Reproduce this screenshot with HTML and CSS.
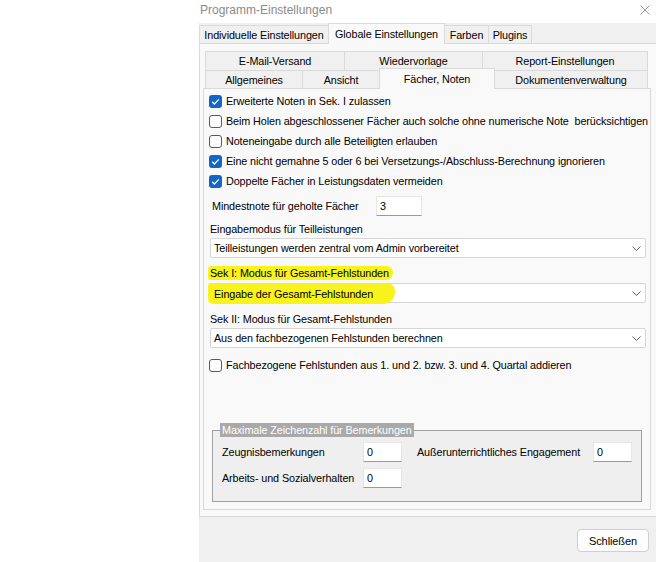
FILE: index.html
```html
<!DOCTYPE html>
<html lang="de">
<head>
    <meta charset="UTF-8">
    <meta name="viewport" content="width=device-width, initial-scale=1.0">
    <title>Programm-Einstellungen</title>
    <link rel="stylesheet" href="styles.css">
</head>
<body>
    <div class="window">
        <div class="titlebar">
            <span class="title">Programm-Einstellungen</span>
            <svg class="close" width="10" height="10" viewBox="0 0 10 10"><path d="M0.5 0.5L9.5 9.5M9.5 0.5L0.5 9.5" stroke="#9a9a9a" stroke-width="1" fill="none"/></svg>
        </div>
        <div class="dialog">
            <div class="outer-tabs">
                <div class="tab t-individuell">Individuelle Einstellungen</div>
                <div class="tab active t-global">Globale Einstellungen</div>
                <div class="tab t-farben">Farben</div>
                <div class="tab t-plugins">Plugins</div>
            </div>
            <div class="outer-page">
                <div class="tab-row back">
                    <div class="tab t-mail">E-Mail-Versand</div>
                    <div class="tab t-wv">Wiedervorlage</div>
                    <div class="tab t-report">Report-Einstellungen</div>
                </div>
                <div class="tab-row front">
                    <div class="tab t-allg">Allgemeines</div>
                    <div class="tab t-ansicht">Ansicht</div>
                    <div class="tab active t-faecher">Fächer, Noten</div>
                    <div class="tab t-doku">Dokumentenverwaltung</div>
                </div>
                <div class="panel">
                    <label class="check"><span class="box on"><svg width="13" height="13" viewBox="0 0 13 13"><path d="M3.2 6.8L5.4 9L9.8 4.4" stroke="#fff" stroke-width="1.3" fill="none"/></svg></span>Erweiterte Noten in Sek. I zulassen</label>
                    <label class="check"><span class="box"></span>Beim Holen abgeschlossener Fächer auch solche ohne numerische Note&nbsp; berücksichtigen</label>
                    <label class="check"><span class="box"></span>Noteneingabe durch alle Beteiligten erlauben</label>
                    <label class="check"><span class="box on"><svg width="13" height="13" viewBox="0 0 13 13"><path d="M3.2 6.8L5.4 9L9.8 4.4" stroke="#fff" stroke-width="1.3" fill="none"/></svg></span>Eine nicht gemahne 5 oder 6 bei Versetzungs-/Abschluss-Berechnung ignorieren</label>
                    <label class="check"><span class="box on"><svg width="13" height="13" viewBox="0 0 13 13"><path d="M3.2 6.8L5.4 9L9.8 4.4" stroke="#fff" stroke-width="1.3" fill="none"/></svg></span>Doppelte Fächer in Leistungsdaten vermeiden</label>

                    <div class="field-row">
                        <span class="field-label">Mindestnote für geholte Fächer</span>
                        <span class="edit wide">3</span>
                    </div>

                    <div class="caption c-first">Eingabemodus für Teilleistungen</div>
                    <div class="combo c-tight">
                        <span>Teilleistungen werden zentral vom Admin vorbereitet</span>
                        <svg width="9" height="5" viewBox="0 0 9 5"><path d="M0.5 0.5L4.5 4.5L8.5 0.5" stroke="#606060" fill="none"/></svg>
                    </div>

                    <div class="caption c-sek1"><span class="mark">Sek I: Modus für Gesamt-Fehlstunden</span></div>
                    <div class="combo c-loose">
                        <span class="mark box-mark">Eingabe der Gesamt-Fehlstunden</span>
                        <svg width="9" height="5" viewBox="0 0 9 5"><path d="M0.5 0.5L4.5 4.5L8.5 0.5" stroke="#606060" fill="none"/></svg>
                    </div>

                    <div class="caption c-sek2">Sek II: Modus für Gesamt-Fehlstunden</div>
                    <div class="combo c-tight">
                        <span>Aus den fachbezogenen Fehlstunden berechnen</span>
                        <svg width="9" height="5" viewBox="0 0 9 5"><path d="M0.5 0.5L4.5 4.5L8.5 0.5" stroke="#606060" fill="none"/></svg>
                    </div>

                    <label class="check c-quartal"><span class="box"></span>Fachbezogene Fehlstunden aus 1. und 2. bzw. 3. und 4. Quartal addieren</label>

                    <fieldset class="group">
                        <legend>Maximale Zeichenzahl für Bemerkungen</legend>
                        <div class="group-row">
                            <span class="lbl-a">Zeugnisbemerkungen</span>
                            <span class="edit">0</span>
                            <span class="lbl-b">Außerunterrichtliches Engagement</span>
                            <span class="edit">0</span>
                        </div>
                        <div class="group-row">
                            <span class="lbl-a">Arbeits- und Sozialverhalten</span>
                            <span class="edit">0</span>
                        </div>
                    </fieldset>
                </div>
            </div>
            <div class="footer">
                <button type="button">Schließen</button>
            </div>
        </div>
    </div>
</body>
</html>
```

FILE: styles.css
```css
* {
    box-sizing: border-box;
}

body {
    margin: 0;
    width: 656px;
    height: 562px;
    overflow: hidden;
    background: #fff;
    font-family: "Liberation Sans", Arial, sans-serif;
    font-size: 10.8px;
    letter-spacing: -0.1px;
    color: #000;
}

.window {
    margin-left: 199px;
    width: 457px;
    height: 562px;
    display: flex;
    flex-direction: column;
}

.titlebar {
    height: 23px;
    flex: none;
    display: flex;
    align-items: center;
    justify-content: space-between;
    padding: 0 6px 4px 1px;
    background: #fff;
}

.title {
    font-size: 12px;
    letter-spacing: 0;
    color: #8a8a8a;
}

.dialog {
    flex: 1;
    background: #f0f0f0;
    display: flex;
    flex-direction: column;
}

/* tabs */

.tab {
    height: 18px;
    flex: none;
    display: flex;
    align-items: center;
    justify-content: center;
    border: 1px solid #dadada;
    border-bottom: none;
    background: #f0f0f0;
    white-space: nowrap;
}

.tab + .tab {
    margin-left: -1px;
}

.tab.active {
    height: 21px;
    margin-bottom: -1px;
    background: #f9f9f9;
    position: relative;
    z-index: 2;
}

.outer-tabs {
    height: 20px;
    display: flex;
    align-items: flex-end;
}

.t-individuell { width: 130px; }
.t-global { width: 117px; }
.t-farben { width: 45px; }
.t-plugins { width: 44px; }

.outer-page {
    height: 474px;
    flex: none;
    background: #f9f9f9;
    border-top: 1px solid #dadada;
    border-left: 1px solid #dadada;
    border-bottom: 1px solid #dadada;
    padding: 7px 0 0 3px;
}

.tab-row {
    display: flex;
    align-items: flex-end;
    padding-left: 2px;
}

.tab-row.back .tab {
    height: 19px;
}

.tab-row.front {
    height: 18px;
}

.t-mail { width: 140px; }
.t-wv { width: 139px; }
.t-report { width: 166px; }
.t-allg { width: 98px; }
.t-ansicht { width: 78px; }
.t-faecher { width: 116px; }
.t-doku { width: 154px; }

.panel {
    width: 448px;
    height: 422px;
    border: 1px solid #dadada;
    background: #f9f9f9;
    padding-top: 2px;
    display: flex;
    flex-direction: column;
    align-items: flex-start;
}

/* controls */

.check {
    height: 20px;
    display: flex;
    align-items: center;
    gap: 4px;
    padding-left: 5px;
    white-space: nowrap;
}

.check.c-quartal {
    margin-top: 7px;
}

.box {
    width: 13px;
    height: 13px;
    flex: none;
    border: 1px solid #5a5a5a;
    border-radius: 3px;
    background: #fdfdfd;
}

.box.on {
    border: none;
    background: #1366c6;
}

.box svg {
    display: block;
}

.field-row {
    margin-top: 5px;
    height: 20px;
    display: flex;
    align-items: center;
    padding-left: 8px;
}

.field-label {
    width: 164px;
}

.edit {
    width: 39px;
    height: 20px;
    background: #fff;
    border: 1px solid #e6e6e6;
    border-bottom-color: #9a9a9a;
    padding: 2px 0 0 3px;
    line-height: 14px;
    align-self: flex-start;
}

.edit.wide {
    width: 46px;
}

.caption {
    height: 14px;
    line-height: 14px;
    padding-left: 6px;
}

.c-first { margin-top: 6px; }
.c-sek1 { margin-top: 8px; }
.c-sek2 { margin-top: 9px; }

.mark {
    background: #f8f31c;
    border-radius: 4px 7px 8px 3px;
}

.caption .mark {
    margin-left: -2px;
    padding: 0 4px 0 2px;
    display: inline-block;
}

.combo {
    width: 436px;
    height: 20px;
    margin-left: 6px;
    display: flex;
    align-items: center;
    justify-content: space-between;
    background: #fff;
    border: 1px solid #d6d6d6;
    border-radius: 2px;
    padding: 0 4px 0 3px;
}

.c-tight { margin-top: 2px; }
.c-loose { margin-top: 3px; }

.combo .box-mark {
    align-self: stretch;
    display: flex;
    align-items: center;
    margin: -1px 0 -2px -6px;
    padding: 0 22px 0 6px;
    border-radius: 3px 8px 12px 5px;
}

/* group box */

.group {
    margin: 48px 0 0 8px;
    width: 430px;
    padding: 0 0 13px 7px;
    border: 1px solid #a0a0a0;
    background: #efefef;
    min-width: 0;
}

.group legend {
    padding: 0 2px;
    height: 14px;
    line-height: 14px;
    background: #a9a9a9;
    color: #fff;
}

.group-row {
    margin-top: 5px;
    height: 20px;
    display: flex;
    align-items: center;
    padding-left: 2px;
}

.group-row + .group-row {
    margin-top: 6px;
}

.lbl-a {
    width: 141px;
}

.lbl-b {
    width: 176px;
    margin-left: 15px;
}

/* footer */

.footer {
    flex: 1;
    display: flex;
    justify-content: flex-end;
    align-items: flex-start;
    padding: 12px 7px 0 0;
}

.footer button {
    width: 72px;
    height: 23px;
    background: #fdfdfd;
    border: 1px solid #d0d0d0;
    border-radius: 4px;
    font-family: inherit;
    font-size: 11px;
    letter-spacing: -0.1px;
    color: #000;
    padding: 0;
}
```
